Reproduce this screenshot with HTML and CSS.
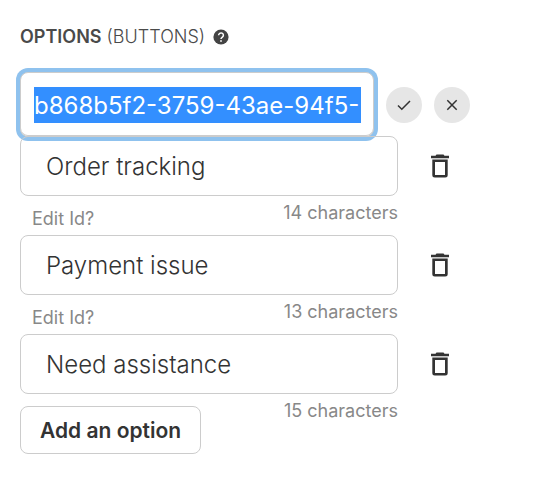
FILE: index.html
```html
<!DOCTYPE html>
<html lang="en">
<head>
<meta charset="utf-8">
<meta name="viewport" content="width=device-width, initial-scale=1">
<title>Options</title>
<link rel="stylesheet" href="styles.css">
</head>
<body>
<svg class="sprite" aria-hidden="true">
  <symbol id="trash" viewBox="0 0 18 24">
    <path d="M5.500 .5h7l1 1.200H18V4.300H0V1.700h4.500z"/>
    <path fill-rule="evenodd" d="M1.300 5.500h15.400V21a2.500 2.500 0 0 1-2.500 2.500H3.800A2.500 2.500 0 0 1 1.300 21zM4 8v13h10V8z"/>
  </symbol>
</svg>
<main class="options">
  <header class="heading">
    <h1 class="title"><strong>OPTIONS</strong> (BUTTONS)</h1>
    <svg class="help" viewBox="0 0 16 16" role="img" aria-label="Help">
      <circle cx="8" cy="8" r="7.600"/>
      <path d="M5.600 6.300a2.400 2.300 0 1 1 3.800 1.800C8.500 8.700 8 9 8 10.100" fill="none" stroke="#fff" stroke-width="1.500"/>
      <rect x="7.200" y="11.200" width="1.600" height="1.600" fill="#fff"/>
    </svg>
  </header>

  <form class="editor">
    <input class="id-input" type="text" aria-label="Option id" value="b868b5f2-3759-43ae-94f5-" spellcheck="false" autocomplete="off" autofocus>
    <button class="round" type="button" aria-label="Save id">
      <svg viewBox="0 0 16 16"><path d="M2 8.500l3.800 3.800L14 3.900"/></svg>
    </button>
    <button class="round" type="button" aria-label="Cancel">
      <svg viewBox="0 0 16 16"><path d="M3.300 3.300l9.400 9.400M12.700 3.300l-9.400 9.400"/></svg>
    </button>
  </form>

  <section class="option">
    <input class="field" type="text" aria-label="Option 1" value="Order tracking">
    <button class="delete" type="button" aria-label="Delete option 1"><svg><use href="#trash"/></svg></button>
    <div class="meta"><a class="edit" href="#">Edit Id?</a><span class="count">14 characters</span></div>
  </section>
  <section class="option">
    <input class="field" type="text" aria-label="Option 2" value="Payment issue">
    <button class="delete" type="button" aria-label="Delete option 2"><svg><use href="#trash"/></svg></button>
    <div class="meta"><a class="edit" href="#">Edit Id?</a><span class="count">13 characters</span></div>
  </section>
  <section class="option">
    <input class="field" type="text" aria-label="Option 3" value="Need assistance">
    <button class="delete" type="button" aria-label="Delete option 3"><svg><use href="#trash"/></svg></button>
    <div class="meta"><button class="add" type="button">Add an option</button><span class="count">15 characters</span></div>
  </section>
</main>
<script src="script.js"></script>
</body>
</html>
```
FILE: styles.css
```css
* {
  box-sizing: border-box;
}

body {
  margin: 0;
  background: #fff;
  color: #333;
  font-family: Inter, "Liberation Sans", sans-serif;
}

button,
input {
  margin: 0;
  color: inherit;
  font-family: inherit;
}

button {
  padding: 0;
  border: 0;
  background: none;
}

.sprite {
  position: absolute;
  width: 0;
  height: 0;
}

.options {
  padding: 25px 60px 24px 20px;
}

.heading {
  display: flex;
  align-items: center;
  gap: 8px;
  color: #4a4a4a;
}

.title {
  margin: 0;
  font-size: 18px;
  font-weight: 300;
  line-height: 24px;
}

.title strong {
  font-weight: 600;
}

.help {
  width: 16px;
  height: 16px;
  fill: #444;
}

.editor {
  display: flex;
  align-items: center;
  gap: 12px;
  margin: 23px 0 -1px;
  padding-right: 12px;
}

/* The selected id is highlighted across the full content box. */
.id-input {
  flex: 1;
  min-width: 0;
  height: 65px;
  padding: 14px 12px 13px 13px;
  border: 1px solid #ccc;
  border-radius: 8px;
  background: linear-gradient(#338fff, #338fff) content-box, #fff;
  font-size: 24px;
  line-height: 36px;
  outline: 0;
  box-shadow: inset 0 -1px #ccc, 0 0 0 4px #8fc2ee;
}

.id-input::selection {
  background: #338fff;
  color: #fff;
}

.round {
  display: grid;
  place-items: center;
  width: 36px;
  height: 36px;
  border-radius: 50%;
  background: #e6e6e6;
}

.round svg {
  width: 16px;
  height: 16px;
  fill: none;
  stroke: #333;
  stroke-width: 1.5;
}

.option {
  position: relative;
  display: grid;
  grid-template-columns: minmax(0, 1fr) 84px;
}

.field {
  width: 100%;
  height: 60px;
  padding: 0 25px;
  border: 1px solid #ccc;
  border-radius: 8px;
  background: transparent;
  font-size: 24px;
  font-weight: 300;
  line-height: 36px;
}

.delete {
  display: grid;
  place-items: center;
}

.delete svg {
  width: 18px;
  height: 24px;
  fill: #333;
}

.meta {
  display: flex;
  align-items: flex-start;
  justify-content: space-between;
  min-height: 39px;
}

.edit,
.count {
  color: #888;
  font-size: 18px;
  line-height: 22px;
}

.edit {
  margin: 12px 0 0 12px;
  text-decoration: none;
}

.count {
  margin-top: 6px;
}

.add {
  height: 48px;
  margin-top: 12px;
  padding: 0 19px;
  border: 1px solid #ccc;
  border-radius: 8px;
  background: #fff;
  font-size: 21px;
  font-weight: 600;
}
```
FILE: script.js
```js
const idInput = document.querySelector(".id-input");
idInput.focus();
idInput.select();
idInput.scrollLeft = 0;
```
